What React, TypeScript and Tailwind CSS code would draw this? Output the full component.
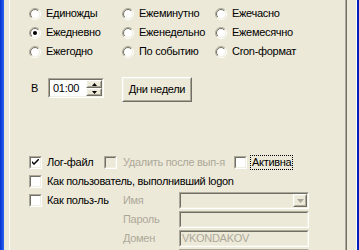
import React from "react";

const font = { fontFamily: "'Liberation Sans', Arial, sans-serif" };

function Radio({ checked }: { checked?: boolean }) {
  return (
    <svg width="12" height="12" viewBox="0 0 12 12" className="shrink-0">
      <defs>
        <linearGradient id="ro" x1="0" y1="0" x2="1" y2="1">
          <stop offset="0.5" stopColor="#aca899" />
          <stop offset="0.5" stopColor="#ffffff" />
        </linearGradient>
        <linearGradient id="ri" x1="0" y1="0" x2="1" y2="1">
          <stop offset="0.5" stopColor="#716f64" />
          <stop offset="0.5" stopColor="#f1efe2" />
        </linearGradient>
      </defs>
      <circle cx="6" cy="6" r="5.5" fill="none" stroke="url(#ro)" strokeWidth="1" />
      <circle cx="6" cy="6" r="4.5" fill="#ffffff" stroke="url(#ri)" strokeWidth="1" />
      {checked && <circle cx="6" cy="6" r="2" fill="#000" />}
    </svg>
  );
}

function Check({ checked, disabled }: { checked?: boolean; disabled?: boolean }) {
  return (
    <div className="w-[13px] h-[13px] shrink-0 border border-t-[#aca899] border-l-[#aca899] border-b-white border-r-white">
      <div
        className={
          "w-full h-full border border-t-[#716f64] border-l-[#716f64] border-b-[#f1efe2] border-r-[#f1efe2] flex items-center justify-center " +
          (disabled ? "bg-[#ece9d8]" : "bg-white")
        }
      >
        {checked && (
          <svg width="7" height="7" viewBox="0 0 7 7">
            <path d="M0 2 L0 4 L2 6 L7 1 L7 -1 L2 4 Z" fill="#000" />
          </svg>
        )}
      </div>
    </div>
  );
}

function Sunken({ className, children }: { className?: string; children?: React.ReactNode }) {
  return (
    <div className={"border border-t-[#aca899] border-l-[#aca899] border-b-white border-r-white " + (className ?? "")}>
      <div className="w-full h-full border border-t-[#716f64] border-l-[#716f64] border-b-[#f1efe2] border-r-[#f1efe2] flex items-center overflow-hidden">
        {children}
      </div>
    </div>
  );
}

function Raised({ className, children }: { className?: string; children?: React.ReactNode }) {
  return (
    <div className={"border border-t-white border-l-white border-b-[#716f64] border-r-[#716f64] bg-[#ece9d8] " + (className ?? "")}>
      <div className="w-full h-full border border-t-[#f1efe2] border-l-[#f1efe2] border-b-[#aca899] border-r-[#aca899] flex items-center justify-center">
        {children}
      </div>
    </div>
  );
}

const radios = [
  ["Единожды", "Ежеминутно", "Ежечасно"],
  ["Ежедневно", "Еженедельно", "Ежемесячно"],
  ["Ежегодно", "По событию", "Cron-формат"],
];

export default function App() {
  return (
    <div className="w-[359px] h-[250px] flex overflow-hidden bg-[#ece9d8] text-[11px] tracking-[-0.3px] text-black leading-none" style={font}>
      <div className="w-[4px] h-full bg-gradient-to-r from-[#0a2fd0] to-[#2a63f0]" />
      <div className="w-[5px] h-full" />
      <div className="w-[338px] h-full border-l border-white border-r border-r-[#716f64]">
        <div className="w-full h-full border-r border-r-[#aca899] flex flex-col">
          {/* radio grid */}
          <div className="pt-[4px] pl-[19px] flex flex-col">
            {radios.map((row, i) => (
              <div key={i} className="flex h-[19px] items-center">
                {row.map((t, j) => (
                  <div key={j} className="w-[93px] flex items-center gap-[5px]">
                    <Radio checked={i === 1 && j === 0} />
                    <span>{t}</span>
                  </div>
                ))}
              </div>
            ))}
          </div>
          {/* time row */}
          <div className="mt-[16px] pl-[21px] flex items-start">
            <div className="w-[17px] h-[20px] mt-[1px] flex items-center">В</div>
            <Sunken className="w-[56px] h-[20px] mt-[1px] bg-white">
              <span className="pl-[3px] flex-1">01:00</span>
              <div className="flex flex-col w-[16px] h-full">
                <Raised className="w-full h-1/2">
                  <svg width="5" height="3" viewBox="0 0 5 3"><path d="M2.5 0 L5 3 L0 3 Z" fill="#000" /></svg>
                </Raised>
                <Raised className="w-full h-1/2">
                  <svg width="5" height="3" viewBox="0 0 5 3"><path d="M0 0 L5 0 L2.5 3 Z" fill="#000" /></svg>
                </Raised>
              </div>
            </Sunken>
            <Raised className="ml-[18px] w-[70px] h-[25px]">
              <span>Дни недели</span>
            </Raised>
          </div>
          {/* checkboxes */}
          <div className="mt-[51px] pl-[19px] flex flex-col">
            <div className="flex h-[19px] items-center">
              <div className="w-[75px] flex items-center gap-[5px]">
                <Check checked />
                <span>Лог-файл</span>
              </div>
              <div className="w-[130px] flex items-center gap-[6px]">
                <Check disabled />
                <span className="text-[#aca899]">Удалить после вып-я</span>
              </div>
              <div className="flex items-center gap-[4px]">
                <Check />
                <span className="outline outline-1 outline-dotted outline-black px-[1px] py-[1px]">Активна</span>
              </div>
            </div>
            <div className="flex h-[19px] items-center gap-[5px]">
              <Check />
              <span>Как пользователь, выполнивший logon</span>
            </div>
            <div className="flex mt-[1px]">
              <div className="w-[94px] h-[17px] flex items-center gap-[5px]">
                <Check />
                <span>Как польз-ль</span>
              </div>
              <div className="flex flex-col gap-[2px]">
                <div className="flex h-[17px] items-center">
                  <span className="w-[56px] text-[#aca899]">Имя</span>
                  <Sunken className="w-[130px] h-[17px]">
                    <div className="flex-1" />
                    <Raised className="w-[14px] h-full">
                      <svg width="7" height="4" viewBox="0 0 7 4"><path d="M0 0 L7 0 L3.5 4 Z" fill="#aca899" /></svg>
                    </Raised>
                  </Sunken>
                </div>
                <div className="flex h-[17px] items-center">
                  <span className="w-[56px] text-[#aca899]">Пароль</span>
                  <Sunken className="w-[130px] h-[17px]" />
                </div>
                <div className="flex h-[17px] items-center">
                  <span className="w-[56px] text-[#aca899]">Домен</span>
                  <Sunken className="w-[130px] h-[17px]">
                    <span className="pl-[1px] text-[#aca899]">VKONDAKOV</span>
                  </Sunken>
                </div>
                <div className="flex h-[17px] items-center">
                  <span className="w-[56px]" />
                  <Sunken className="w-[130px] h-[17px]" />
                </div>
              </div>
            </div>
          </div>
        </div>
      </div>
      <div className="w-[9px] h-full" />
      <div className="w-px h-full bg-white" />
      <div className="w-[2px] h-full bg-[#0020b8]" />
    </div>
  );
}
